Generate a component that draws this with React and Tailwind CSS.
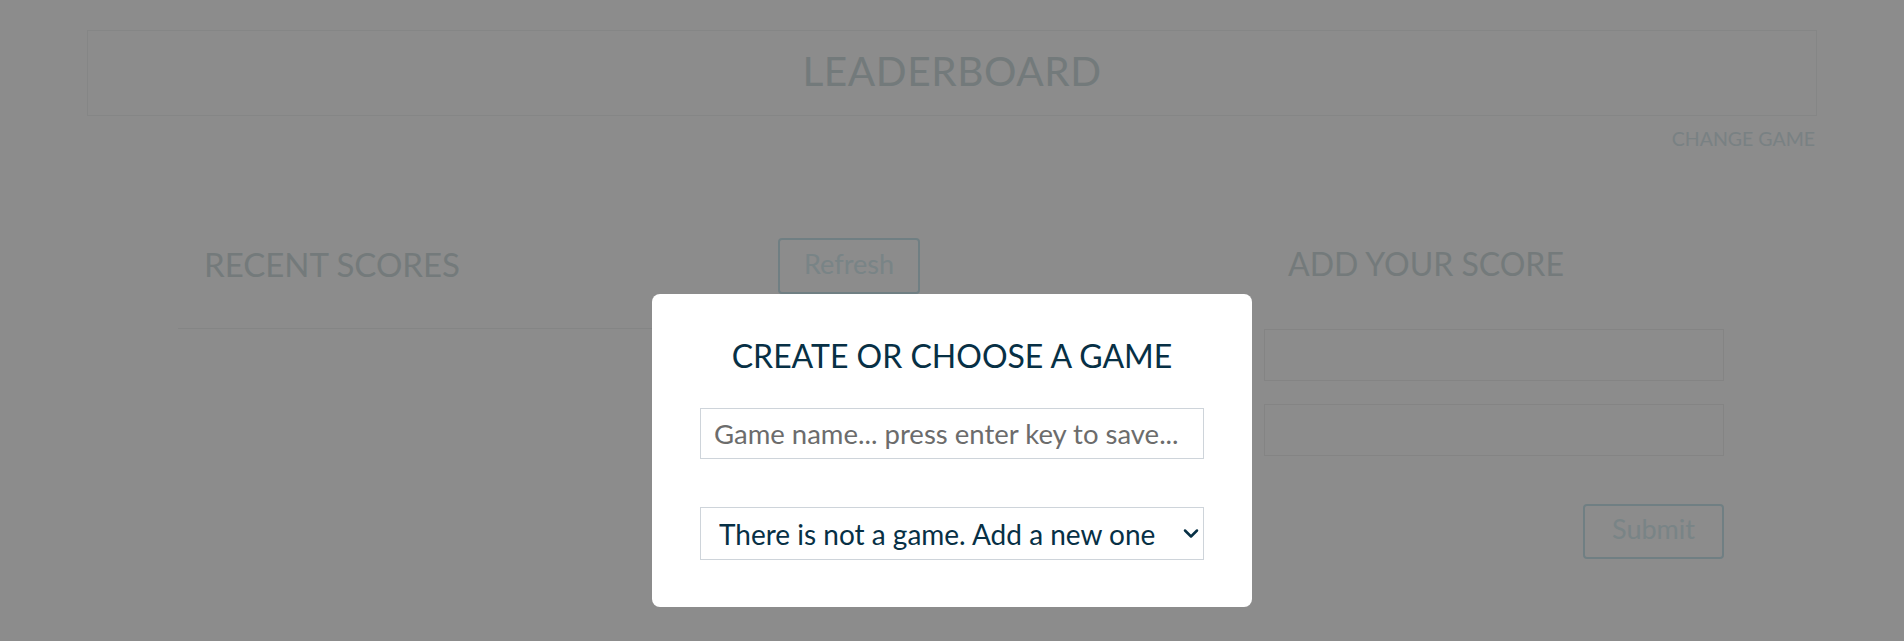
export default function App() {
  return (
    <div
      className="relative min-h-[641px] bg-white overflow-hidden"
      style={{ fontFamily: "Lato, 'Noto Sans', sans-serif" }}
    >
      {/* Header */}
      <div className="px-[87px] pt-[30px]">
        <div className="h-[86px] border border-[#f2f4f4] flex items-center justify-center">
          <h1 className="text-[40.5px] leading-none tracking-[0.6px] text-[#d1dee1] mt-[-3px]">LEADERBOARD</h1>
        </div>
        <div className="flex justify-end mt-[13px] pr-[2px]">
          <a className="text-[19.5px] leading-none text-[#dcebef]">CHANGE GAME</a>
        </div>
      </div>

      {/* Body */}
      <div className="flex justify-between pl-[178px] pr-[180px] mt-[88px]">
        <div className="w-[768px]">
          <div className="flex items-start justify-between pl-[26px] pr-[26px] pt-[1px] h-[92px] border-b border-[#f0f2f2]">
            <h2 className="mt-[10px] text-[33px] leading-none text-[#d3dfe1]">RECENT SCORES</h2>
            <button className="w-[142px] h-[56px] pb-[5px] border-2 border-[#cde8ef] rounded-[4px] text-[27px] leading-none text-[#dcf0f5]">
              Refresh
            </button>
          </div>
        </div>
        <div className="w-[460px]">
          <div className="h-[92px] pt-[11px] pl-[24px]">
            <h2 className="text-[32px] leading-none text-[#d3dfe1]">ADD YOUR SCORE</h2>
          </div>
          <div className="flex flex-col gap-[23px]">
            <div className="h-[52px] border border-[#f0f0f0]" />
            <div className="h-[52px] border border-[#f0f0f0]" />
          </div>
          <div className="flex justify-end mt-[48px]">
            <button className="w-[141px] h-[55px] pb-[5px] border-2 border-[#cde8ef] rounded-[4px] text-[27px] leading-none text-[#dcf0f5]">
              Submit
            </button>
          </div>
        </div>
      </div>

      {/* Overlay + modal */}
      <div className="fixed inset-0 bg-black/45 flex justify-center items-start pt-[294px]">
        <div className="w-[600px] h-[313px] bg-white rounded-[8px] px-[48px] pt-[46px]">
          <h3 className="text-center text-[32px] leading-none text-[#073045]">CREATE OR CHOOSE A GAME</h3>
          <input
            className="mt-[36px] block w-full h-[51px] border border-[#ced4da] px-[13px] text-[27.5px] text-[#073045] placeholder:text-[#6c6c6c] outline-none"
            placeholder="Game name... press enter key to save..."
            style={{ fontFamily: "Lato, 'Noto Sans', sans-serif" }}
          />
          <div className="relative mt-[48px]">
            <select
              className="block w-full h-[53px] border border-[#ced4da] bg-white pl-[18px] pr-[40px] text-[28px] text-[#073045] appearance-none outline-none"
              style={{ fontFamily: "Lato, 'Noto Sans', sans-serif" }}
            >
              <option>There is not a game. Add a new one</option>
            </select>
            <svg
              className="absolute right-[5px] top-[21px] pointer-events-none"
              width="16"
              height="11"
              viewBox="0 0 16 11"
              fill="none"
            >
              <path d="M2 2.5 L8 8.5 L14 2.5" stroke="#073045" strokeWidth="2.5" strokeLinecap="round" strokeLinejoin="round" />
            </svg>
          </div>
        </div>
      </div>
    </div>
  );
}
